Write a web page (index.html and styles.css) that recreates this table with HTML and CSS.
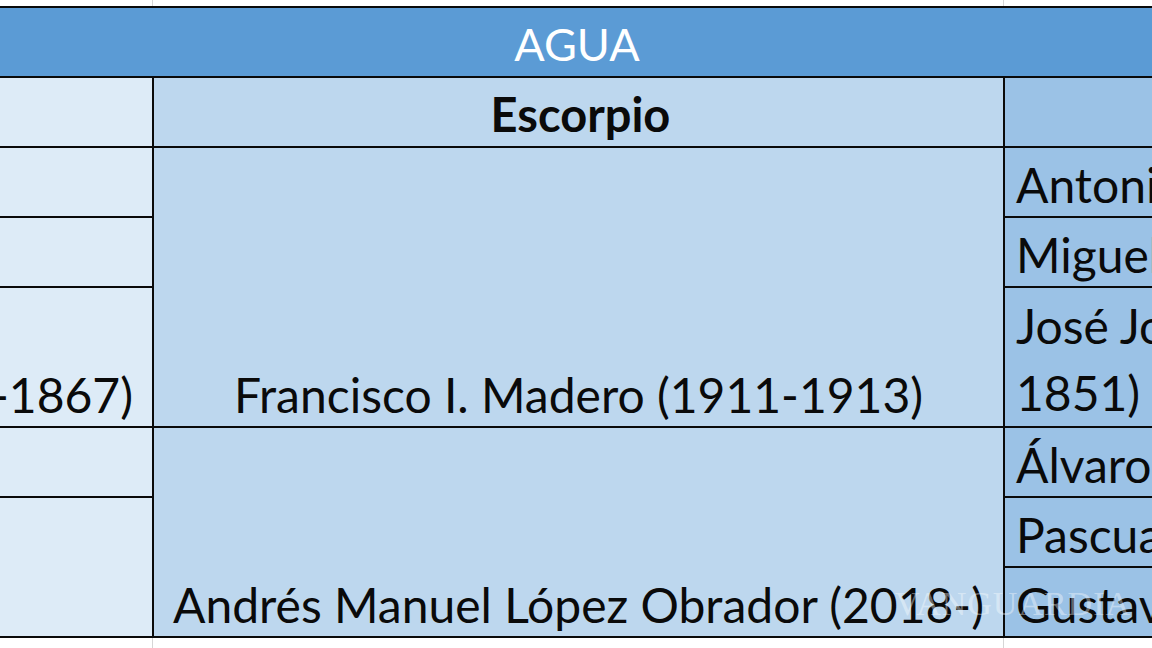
FILE: index.html
```
<!DOCTYPE html>
<html lang="es">
<head>
<meta charset="utf-8">
<title>AGUA - Escorpio</title>
<link rel="stylesheet" href="styles.css">
</head>
<body>
<div class="page">
  <div class="strip strip-top"><span></span><span></span><span></span></div>
  <div class="sheet">
    <div class="cell head">AGUA</div>

    <div class="cell c-left"></div>
    <div class="cell c-mid sign">Escorpio</div>
    <div class="cell c-right"></div>

    <div class="cell c-left r3"><span class="txt"></span></div>
    <div class="cell c-mid r3-5 center"><span class="txt">Francisco I. Madero (1911-1913)</span></div>
    <div class="cell c-right r3"><span class="txt">Antonio López de Santa Anna (1833-1855)</span></div>

    <div class="cell c-left r4"></div>
    <div class="cell c-right r4"><span class="txt">Miguel Barragán (1835-1836)</span></div>

    <div class="cell c-left r5 end"><span class="txt">Maximiliano de Habsburgo (1864-1867)</span></div>
    <div class="cell c-right r5 wrap"><span class="txt">José Joaquín de Herrera (1848-<br>1851)</span></div>

    <div class="cell c-left r6"></div>
    <div class="cell c-mid r6-8 center"><span class="txt">Andrés Manuel López Obrador (2018-)</span></div>
    <div class="cell c-right r6"><span class="txt">Álvaro Obregón (1920-1924)</span></div>

    <div class="cell c-left r7-8"></div>
    <div class="cell c-right r7"><span class="txt">Pascual Ortiz Rubio (1930-1932)</span></div>

    <div class="cell c-right r8"><span class="txt">Gustavo Díaz Ordaz (1964-1970)</span></div>
  </div>
  <div class="strip strip-bottom"><span></span><span></span><span></span></div>
  <div class="watermark">VANGUARDIA</div>
</div>
</body>
</html>
```

FILE: styles.css
```
html, body {
  margin: 0;
  padding: 0;
  background: #ffffff;
}

.page {
  position: relative;
  width: 1152px;
  height: 648px;
  overflow: hidden;
  font-family: Lato, "Open Sans", sans-serif;
  color: #0a0a0a;
}

.strip {
  display: grid;
  grid-template-columns: 153px 851px 1fr;
  background: #ffffff;
}

.strip span {
  border-right: 1px solid #d6d6d6;
}

.strip span:last-child {
  border-right: none;
}

.strip-top {
  height: 6px;
}

.strip-bottom {
  height: 10px;
}

.sheet {
  display: grid;
  grid-template-columns: 152px 849px 1fr;
  grid-template-rows: 68px 68px 68px 68px 138px 68px 68px 68px;
  gap: 2px;
  padding: 2px 0;
  background: #0a0a0a;
}

.cell {
  display: flex;
  align-items: flex-end;
  overflow: hidden;
  white-space: nowrap;
  font-size: 48px;
  line-height: 54px;
  padding-bottom: 4px;
  box-sizing: border-box;
}

.head {
  grid-column: 1 / -1;
  background: #5b9bd5;
  color: #ffffff;
  justify-content: center;
  font-size: 45px;
  padding-bottom: 5px;
  padding-left: 2px;
}

.c-left {
  grid-column: 1;
  background: #ddebf7;
}

.c-mid {
  grid-column: 2;
  background: #bdd7ee;
}

.c-right {
  grid-column: 3;
  background: #9bc2e6;
  padding-left: 11px;
}

.sign {
  justify-content: center;
  font-weight: 700;
  font-size: 47px;
  padding-bottom: 5px;
  padding-left: 4px;
}

.center {
  justify-content: center;
}

.end {
  justify-content: flex-end;
  padding-right: 19px;
}

.wrap {
  line-height: 67px;
  padding-bottom: 0;
}

.r3 { grid-row: 3; }
.r4 { grid-row: 4; }
.r5 { grid-row: 5; }
.r6 { grid-row: 6; }
.r7 { grid-row: 7; }
.r8 { grid-row: 8; }
.r3-5 { grid-row: 3 / 6; }
.r6-8 { grid-row: 6 / 9; }
.r7-8 { grid-row: 7 / 9; }

.txt {
  flex: none;
}

.watermark {
  position: absolute;
  left: 895px;
  top: 585px;
  font-family: "Liberation Serif", "DejaVu Serif", serif;
  font-size: 34px;
  letter-spacing: 1px;
  color: rgba(255, 255, 255, 0.4);
  white-space: nowrap;
}
```
